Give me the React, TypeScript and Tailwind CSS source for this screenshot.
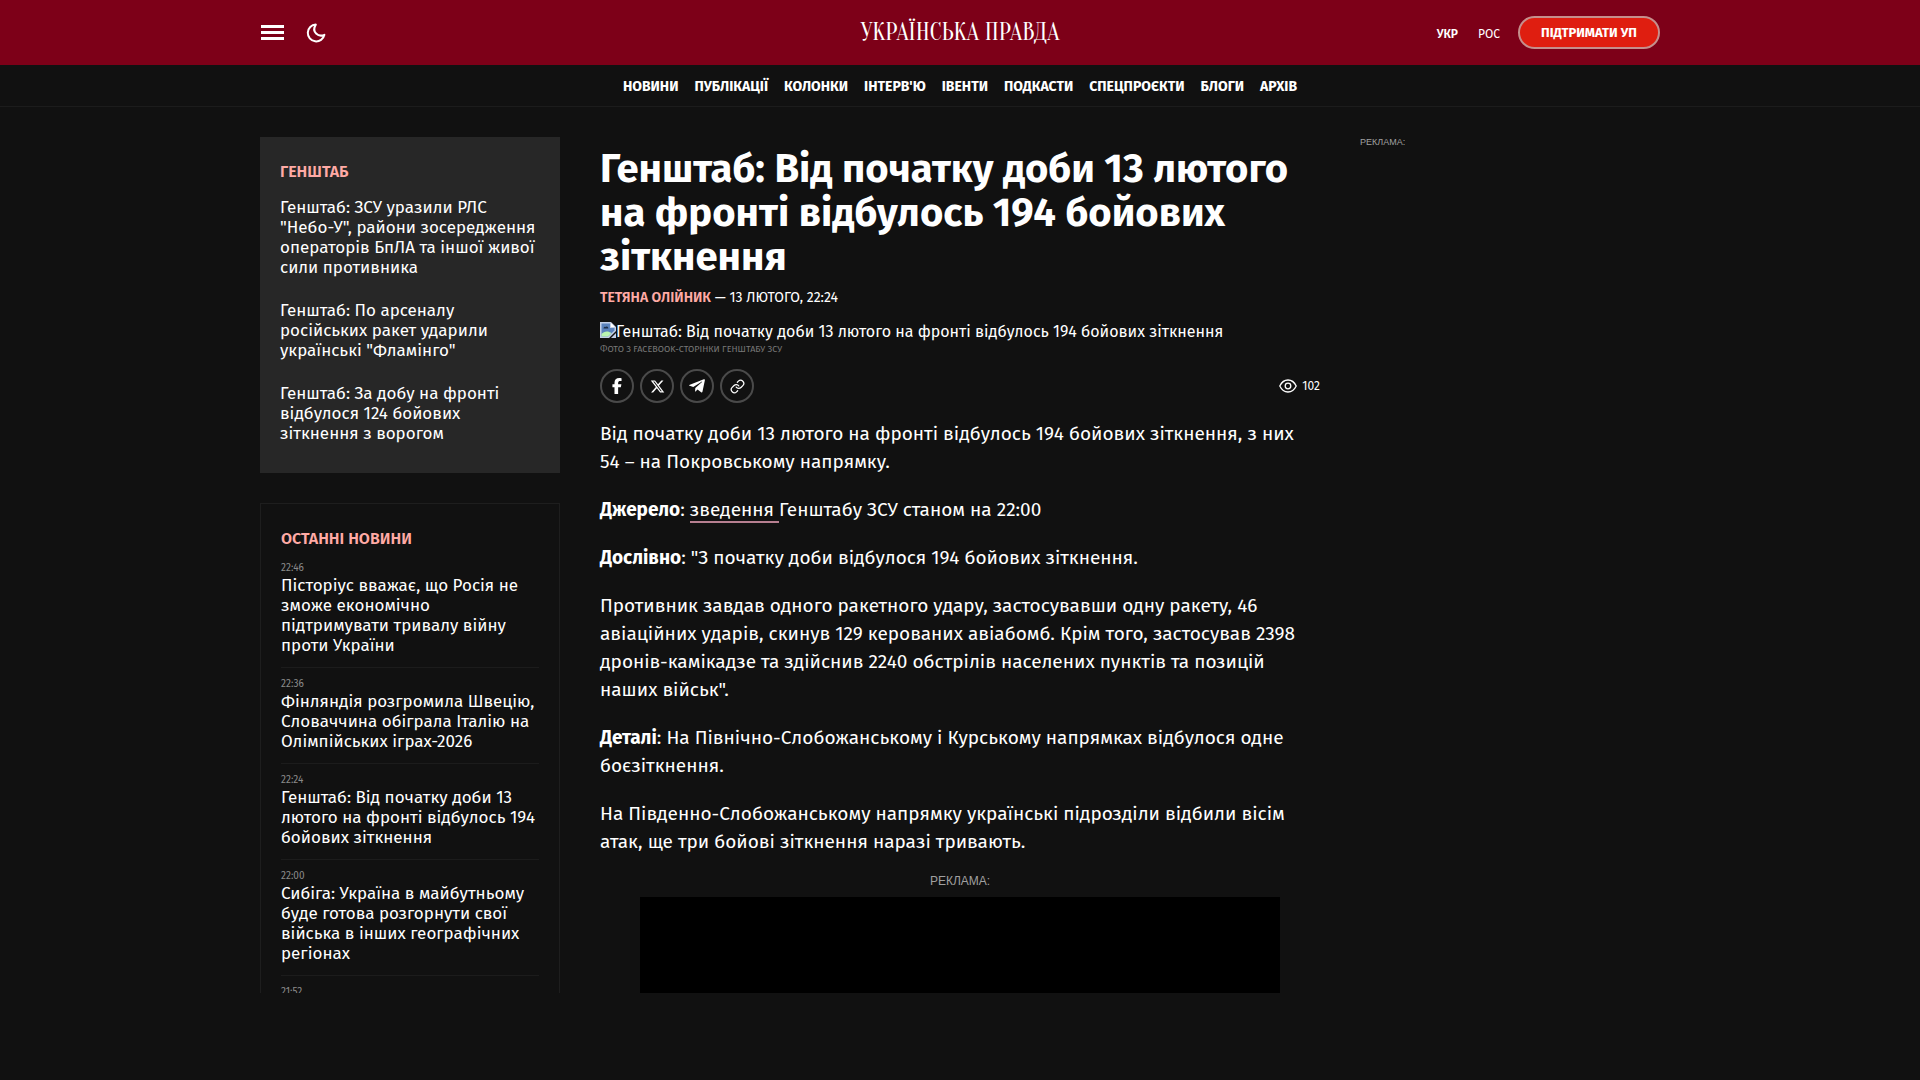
import React from 'react';
import { Link } from 'lucide-react';
import { FaFacebookF, FaXTwitter } from 'react-icons/fa6';
import { FaTelegramPlane } from 'react-icons/fa';

type NewsItem = {
    time: string;
    title: string;
};

const NAV_ITEMS = ['Новини', 'Публікації', 'Колонки', "Інтерв'ю", 'Івенти', 'Подкасти', 'Спецпроєкти', 'Блоги', 'Архів'];

const RELATED = [
    'Генштаб: ЗСУ уразили РЛС "Небо-У", райони зосередження операторів БпЛА та іншої живої сили противника',
    'Генштаб: По арсеналу російських ракет ударили українські "Фламінго"',
    'Генштаб: За добу на фронті відбулося 124 бойових зіткнення з ворогом',
];

const LATEST: NewsItem[] = [
    { time: '22:46', title: 'Пісторіус вважає, що Росія не зможе економічно підтримувати тривалу війну проти України' },
    { time: '22:36', title: 'Фінляндія розгромила Швецію, Словаччина обіграла Італію на Олімпійських іграх-2026' },
    { time: '22:24', title: 'Генштаб: Від початку доби 13 лютого на фронті відбулось 194 бойових зіткнення' },
    { time: '22:00', title: 'Сибіга: Україна в майбутньому буде готова розгорнути свої війська в інших географічних регіонах' },
    { time: '21:52', title: '' },
];

const SHARE_LINKS = [
    { label: 'Facebook', icon: <FaFacebookF size={16} /> },
    { label: 'X', icon: <FaXTwitter size={15} /> },
    { label: 'Telegram', icon: <FaTelegramPlane size={18} /> },
    { label: 'Скопіювати посилання', icon: <Link size={15} strokeWidth={2} /> },
];

const MoonIcon = () => (
    <svg width="20" height="20" viewBox="0 0 20 20" fill="none" stroke="currentColor" strokeWidth="2" strokeLinejoin="round">
        <path d="M9.800 1.600A8.400 8.400 0 1 0 18.400 11.800C12.500 14.500 5 9 9.800 1.600Z" />
    </svg>
);

const EyeIcon = () => (
    <svg width="18" height="14" viewBox="0 0 18 14" fill="none" stroke="currentColor" strokeWidth="1.3">
        <path d="M.8 7C2.600 3.200 5.500 1 9 1s6.400 2.200 8.200 6C15.400 10.800 12.500 13 9 13S2.600 10.800.8 7Z" />
        <circle cx="9" cy="7" r="2.800" />
    </svg>
);

const BrokenImageIcon = () => (
    <svg width="16" height="16" viewBox="0 0 16 16" className="shrink-0">
        <path d="M0 0h11l5 5v4L9 16H0Z" fill="#c3cfe6" />
        <path d="M1.500 1.500H10V6h4.500v2.500L8 14.500H1.500Z" fill="#5b83bd" />
        <path d="M11 1v4h4Z" fill="#fff" />
        <path d="M3.500 6.500C3.500 5 5 4.500 5.800 5 7 4 8.500 5 8.300 6.500Z" fill="#1d2f4a" />
        <path d="M1.500 14.500V12C4 9 8 8.500 11.500 11L8 14.500Z" fill="#b9f5b0" />
        <path d="M16 11v5h-5Z" fill="#c3cfe6" />
    </svg>
);

const Header = () => (
    <header>
        <div className="bg-[#7d0018]">
            <div className="mx-auto grid h-[65px] max-w-[1400px] grid-cols-3 items-center">
                <div className="flex items-center gap-[22px]">
                    <button type="button" aria-label="Меню" className="flex w-6 flex-col gap-[3px] pl-px">
                        <span className="h-[3px] bg-white" />
                        <span className="h-[3px] bg-white" />
                        <span className="h-[3px] bg-white" />
                    </button>
                    <button type="button" aria-label="Темна тема">
                        <MoonIcon />
                    </button>
                </div>
                <a href="#" className="justify-self-center whitespace-nowrap font-[Oranienbaum,'Liberation_Serif',serif] text-2xl">
                    УКРАЇНСЬКА ПРАВДА
                </a>
                <div className="flex items-center justify-end text-xs">
                    <a href="#" className="pt-0.5 font-semibold">УКР</a>
                    <a href="#" className="ml-5 mr-[18px] pt-0.5">РОС</a>
                    <a
                        href="#"
                        className="flex h-[33px] w-[142px] items-center justify-center rounded-full border-2 border-[#c58f8c] bg-[#df1e10] text-[13px] font-bold"
                    >
                        ПІДТРИМАТИ УП
                    </a>
                </div>
            </div>
        </div>
        <nav className="flex h-[42px] items-center justify-center gap-4 border-b border-[#1c1c1c] pt-0.5 text-sm font-bold uppercase">
            {NAV_ITEMS.map(item => (
                <a key={item} href="#">{item}</a>
            ))}
        </nav>
    </header>
);

const Sidebar = () => (
    <aside className="w-[300px] shrink-0 text-[17px] leading-5">
        <section className="bg-[#272727] px-5 pb-[29px] pt-[25px]">
            <h2 className="text-base leading-5 font-semibold uppercase text-[#ffaaa5]">Генштаб</h2>
            <ul className="mt-4 flex flex-col gap-[23px]">
                {RELATED.map(title => (
                    <li key={title}><a href="#">{title}</a></li>
                ))}
            </ul>
        </section>

        <section className="mt-[30px] border border-[#1e1e1e] px-5 pt-[25px]">
            <h2 className="text-base leading-5 font-semibold uppercase text-[#ffaaa5]">Останні новини</h2>
            <ul className="mt-[11px]">
                {LATEST.map(({ time, title }) => (
                    <li key={time} className="mb-2 border-b border-[#1c1c1c] pb-[11px]">
                        <time className="block text-[10px] leading-4 text-[#8a8a8a]">{time}</time>
                        <a href="#">{title}</a>
                    </li>
                ))}
            </ul>
        </section>
    </aside>
);

const Article = () => (
    <article className="min-w-0 flex-1 pt-2.5">
        <h1 className="text-[40px] leading-[44px] font-bold">
            Генштаб: Від початку доби 13 лютого на фронті відбулось 194 бойових зіткнення
        </h1>
        <p className="mt-[9px] text-sm uppercase">
            <a href="#" className="font-semibold text-[#ffaaa5]">Тетяна Олійник</a> — 13 лютого, 22:24
        </p>

        <figure className="mt-3.5">
            <div className="flex items-start text-base leading-5">
                <BrokenImageIcon />
                <span>Генштаб: Від початку доби 13 лютого на фронті відбулось 194 бойових зіткнення</span>
            </div>
            <figcaption className="text-[9px] leading-[14px] uppercase text-[#777]">Фото з Facebook-сторінки Генштабу ЗСУ</figcaption>
        </figure>

        <div className="mt-[13px] flex items-center justify-between">
            <div className="flex gap-1.5">
                {SHARE_LINKS.map(({ label, icon }) => (
                    <button
                        key={label}
                        type="button"
                        aria-label={label}
                        className="grid size-[34px] place-items-center rounded-full border-2 border-[#4a4a4a]"
                    >
                        {icon}
                    </button>
                ))}
            </div>
            <div className="flex items-center gap-[5px] text-xs">
                <EyeIcon />
                <span>102</span>
            </div>
        </div>

        <div className="mt-[17px] flex flex-col gap-5 pr-3 text-[19px] leading-7">
            <p>Від початку доби 13 лютого на фронті відбулось 194 бойових зіткнення, з них 54 – на Покровському напрямку.</p>
            <p>
                <strong>Джерело</strong>: <a href="#" className="border-b-2 border-[#b77f90] leading-5">зведення </a>Генштабу ЗСУ станом на 22:00
            </p>
            <p><strong>Дослівно</strong>: "З початку доби відбулося 194 бойових зіткнення.</p>
            <p>
                Противник завдав одного ракетного удару, застосувавши одну ракету, 46 авіаційних ударів, скинув 129
                керованих авіабомб. Крім того, застосував 2398 дронів-камікадзе та здійснив 2240 обстрілів населених
                пунктів та позицій наших військ".
            </p>
            <p><strong>Деталі</strong>: На Північно-Слобожанському і Курському напрямках відбулося одне боєзіткнення.</p>
            <p>
                На Південно-Слобожанському напрямку українські підрозділи відбили вісім атак, ще три бойові зіткнення
                наразі тривають.
            </p>
        </div>

        {/* Рекламний блок */}
        <div className="mx-10 mt-[15px] font-['Liberation_Sans',sans-serif]">
            <p className="text-center text-xs leading-5 text-[#a0a0a0]">РЕКЛАМА:</p>
            <div className="mt-1.5 h-[250px] bg-black" />
        </div>
    </article>
);

const App = () => {
    return (
        <div className="flex h-screen flex-col bg-[#111] pb-[87px] font-['Fira_Sans',sans-serif] text-white">
            <Header />
            <main className="min-h-0 flex-1 overflow-hidden pt-[30px]">
                <div className="mx-auto flex max-w-[1400px] gap-10">
                    <Sidebar />
                    <Article />
                    <aside className="w-[300px] shrink-0 font-['Liberation_Sans',sans-serif] text-[9px] leading-[10px] text-[#a0a0a0]">
                        РЕКЛАМА:
                    </aside>
                </div>
            </main>
        </div>
    );
};

export default App;
